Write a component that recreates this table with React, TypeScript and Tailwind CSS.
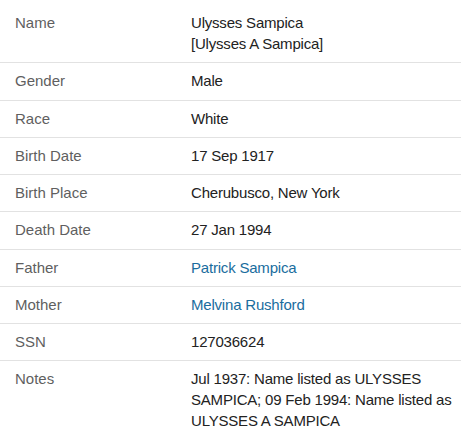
const ROWS: { label: string; value: React.ReactNode; link?: boolean }[] = [
  {
    label: 'Name',
    value: (
      <>
        Ulysses Sampica
        <br />
        [Ulysses A Sampica]
      </>
    ),
  },
  { label: 'Gender', value: 'Male' },
  { label: 'Race', value: 'White' },
  { label: 'Birth Date', value: '17 Sep 1917' },
  { label: 'Birth Place', value: 'Cherubusco, New York' },
  { label: 'Death Date', value: '27 Jan 1994' },
  { label: 'Father', value: 'Patrick Sampica', link: true },
  { label: 'Mother', value: 'Melvina Rushford', link: true },
  { label: 'SSN', value: '127036624' },
  {
    label: 'Notes',
    value: 'Jul 1937: Name listed as ULYSSES SAMPICA; 09 Feb 1994: Name listed as ULYSSES A SAMPICA',
  },
];

export default function App() {
  return (
    <div
      className="w-[461px] h-[433px] overflow-hidden bg-white pt-[5px] text-[15px] leading-[21px]"
      style={{ fontFamily: '"Liberation Sans", Arial, sans-serif' }}
    >
      {ROWS.map((row, i) => (
        <div
          key={row.label}
          className={
            'flex pt-[7px] pb-[8.25px] ' + (i < ROWS.length - 1 ? 'border-b border-[#e2e2e2]' : '')
          }
        >
          <div className="w-[191px] shrink-0 pl-[15px] text-[#5f5f5f]">{row.label}</div>
          <div
            className={
              'flex-1 tracking-[-0.2px] ' + (row.link ? 'text-[#1a6d9e]' : 'text-[#222222]')
            }
          >
            {row.value}
          </div>
        </div>
      ))}
    </div>
  );
}
